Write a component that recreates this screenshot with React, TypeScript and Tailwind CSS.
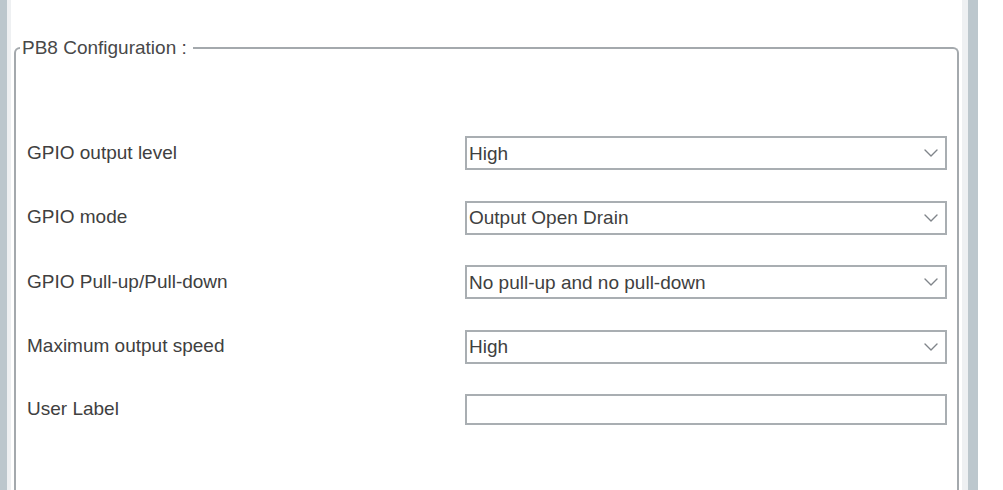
import { ChevronDown } from 'lucide-react'

type Row = {
  label: string
  value?: string
  kind: 'select' | 'text'
}

const rows: Row[] = [
  { label: 'GPIO output level', value: 'High', kind: 'select' },
  { label: 'GPIO mode', value: 'Output Open Drain', kind: 'select' },
  { label: 'GPIO Pull-up/Pull-down', value: 'No pull-up and no pull-down', kind: 'select' },
  { label: 'Maximum output speed', value: 'High', kind: 'select' },
  { label: 'User Label', kind: 'text' },
]

function SelectBox({ value }: { value: string }) {
  return (
    <div className="flex h-[34px] flex-1 items-center justify-between border-2 border-[#a9aeb2] bg-white pl-[2px] pr-[2px]">
      <span className="leading-none">{value}</span>
      <ChevronDown className="h-6 w-6 text-[#80858a]" strokeWidth={1.4} />
    </div>
  )
}

export default function App() {
  return (
    <div
      className="flex h-[490px] w-[1003px] overflow-hidden bg-white text-[19px] text-[#404040]"
      style={{ fontFamily: '"Liberation Sans", Arial, sans-serif' }}
    >
      {/* left edge of the outer panel */}
      <div className="w-[7px] shrink-0 bg-[#bcc7cd]" />
      <div className="w-[4px] shrink-0 bg-[#eef0f2]" />

      <div className="flex w-[951px] shrink-0 flex-col pl-[3px] pr-[3px] pt-[38px]">
        <fieldset className="flex flex-1 flex-col rounded-t-[6px] border-2 border-b-0 border-[#a4a9ad] pl-[11px] pr-[10px] pt-[78px]">
          <legend className="-ml-[7px] pl-[2px] pr-[6px] leading-[20px] text-[#484848]">PB8 Configuration :</legend>

          <div className="flex flex-col gap-[30.5px]">
            {rows.map((row) => (
              <div key={row.label} className="flex items-center">
                <div className="w-[438px] shrink-0">{row.label}</div>
                {row.kind === 'select' ? (
                  <SelectBox value={row.value ?? ''} />
                ) : (
                  <div className="h-[31px] flex-1 border-2 border-[#a9aeb2] bg-white" />
                )}
              </div>
            ))}
          </div>
        </fieldset>
      </div>

      {/* right edge */}
      <div className="w-[6px] shrink-0 bg-[#eef0f2]" />
      <div className="w-[10px] shrink-0 bg-[#bcc7cd]" />
      <div className="flex-1 bg-white" />
    </div>
  )
}
